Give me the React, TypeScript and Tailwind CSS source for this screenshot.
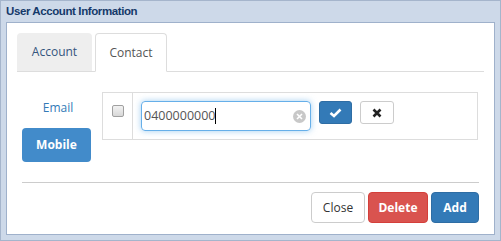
import React from "react";

export default function App() {
  return (
    <div className="w-[501px] h-[241px] bg-[#cdd9e9] border border-[#a5b5cc] flex flex-col" style={{ fontFamily: '"Open Sans", sans-serif' }}>
      <div className="shrink-0 h-[21px] flex items-center pl-[5px] pt-[1px] text-[11.5px] tracking-[-0.4px] font-bold text-[#15396a]" style={{ fontFamily: '"Liberation Sans", Arial, sans-serif' }}>
        User Account Information
      </div>
      <div className="flex-1 mx-[5px] mb-[5px] bg-white border border-[#9fb1cb] flex flex-col px-[10px] pt-[10px]">
        <div className="shrink-0 flex items-end border-b border-[#dddddd] h-[39px]">
          <div className="w-[75px] h-[38px] bg-[#eeeeee] rounded-t-[4px] flex items-center justify-center text-[12px] text-[#34557d]">Account</div>
          <div className="ml-[3px] w-[72px] h-[39px] bg-white border border-[#dddddd] border-b-white rounded-t-[4px] flex items-center justify-center text-[12px] text-[#555555] -mb-[1px]">Contact</div>
        </div>
        <div className="shrink-0 flex items-start pt-[20px] pl-[5px]">
          <div className="w-[69px] flex flex-col items-center pt-[7px]">
            <div className="text-[12px] text-[#337ab7] leading-[18px] ml-[3px]">Email</div>
            <div className="mt-[11px] w-[69px] h-[34px] rounded-[4px] bg-[#428bca] text-white text-[12px] font-bold flex items-center justify-center">Mobile</div>
          </div>
          <div className="ml-[11px] w-[376px] h-[48px] border border-[#dddddd] flex">
            <div className="w-[30px] border-r border-[#dddddd] flex justify-center pt-[12px]">
              <div className="w-[12px] h-[12px] rounded-[2px] border border-[#a0a0a0] bg-gradient-to-b from-[#f2f2f2] to-[#d8d8d8]"></div>
            </div>
            <div className="flex items-start pt-[8px] pl-[8px]">
              <div className="w-[170px] h-[30px] rounded-[4px] border border-[#66afe9] shadow-[0_0_6px_rgba(102,175,233,0.6)] flex items-center pl-[2px] pr-[4px]">
                <span className="text-[12.5px] text-[#555]">0400000000</span>
                <span className="w-px h-[16px] bg-black"></span>
                <span className="ml-auto w-[13px] h-[13px] rounded-full bg-[#c8c8c8] flex items-center justify-center">
                  <svg width="7" height="7" viewBox="0 0 7 7"><path d="M1 1L6 6M6 1L1 6" stroke="white" strokeWidth="1.6" /></svg>
                </span>
              </div>
              <div className="ml-[8px] w-[33px] h-[23px] rounded-[3px] bg-[#337ab7] border border-[#2e6da4] flex items-center justify-center">
                <svg width="13" height="10" viewBox="0 0 13 10"><path d="M1.5 5L5 8L11.5 1.5" stroke="white" strokeWidth="2.6" fill="none" /></svg>
              </div>
              <div className="ml-[8px] w-[34px] h-[23px] rounded-[3px] bg-white border border-[#cccccc] flex items-center justify-center">
                <svg width="10" height="10" viewBox="0 0 10 10"><path d="M1.5 1.5L8.5 8.5M8.5 1.5L1.5 8.5" stroke="#222" strokeWidth="2.6" /></svg>
              </div>
            </div>
          </div>
        </div>
        <div className="shrink-0 mt-[20px] ml-[5px] mr-[5px] border-t border-[#cccccc]"></div>
        <div className="shrink-0 flex justify-end gap-[3px] mt-[9px] mr-[5px]">
          <div className="w-[54px] h-[31px] rounded-[4px] border border-[#cccccc] bg-white text-[#333] text-[12px] flex items-center justify-center">Close</div>
          <div className="w-[60px] h-[31px] rounded-[4px] bg-[#d9534f] border border-[#d43f3a] text-white text-[12px] font-bold flex items-center justify-center">Delete</div>
          <div className="w-[48px] h-[31px] rounded-[4px] bg-[#337ab7] border border-[#2e6da4] text-white text-[12px] font-bold flex items-center justify-center">Add</div>
        </div>
      </div>
    </div>
  );
}
